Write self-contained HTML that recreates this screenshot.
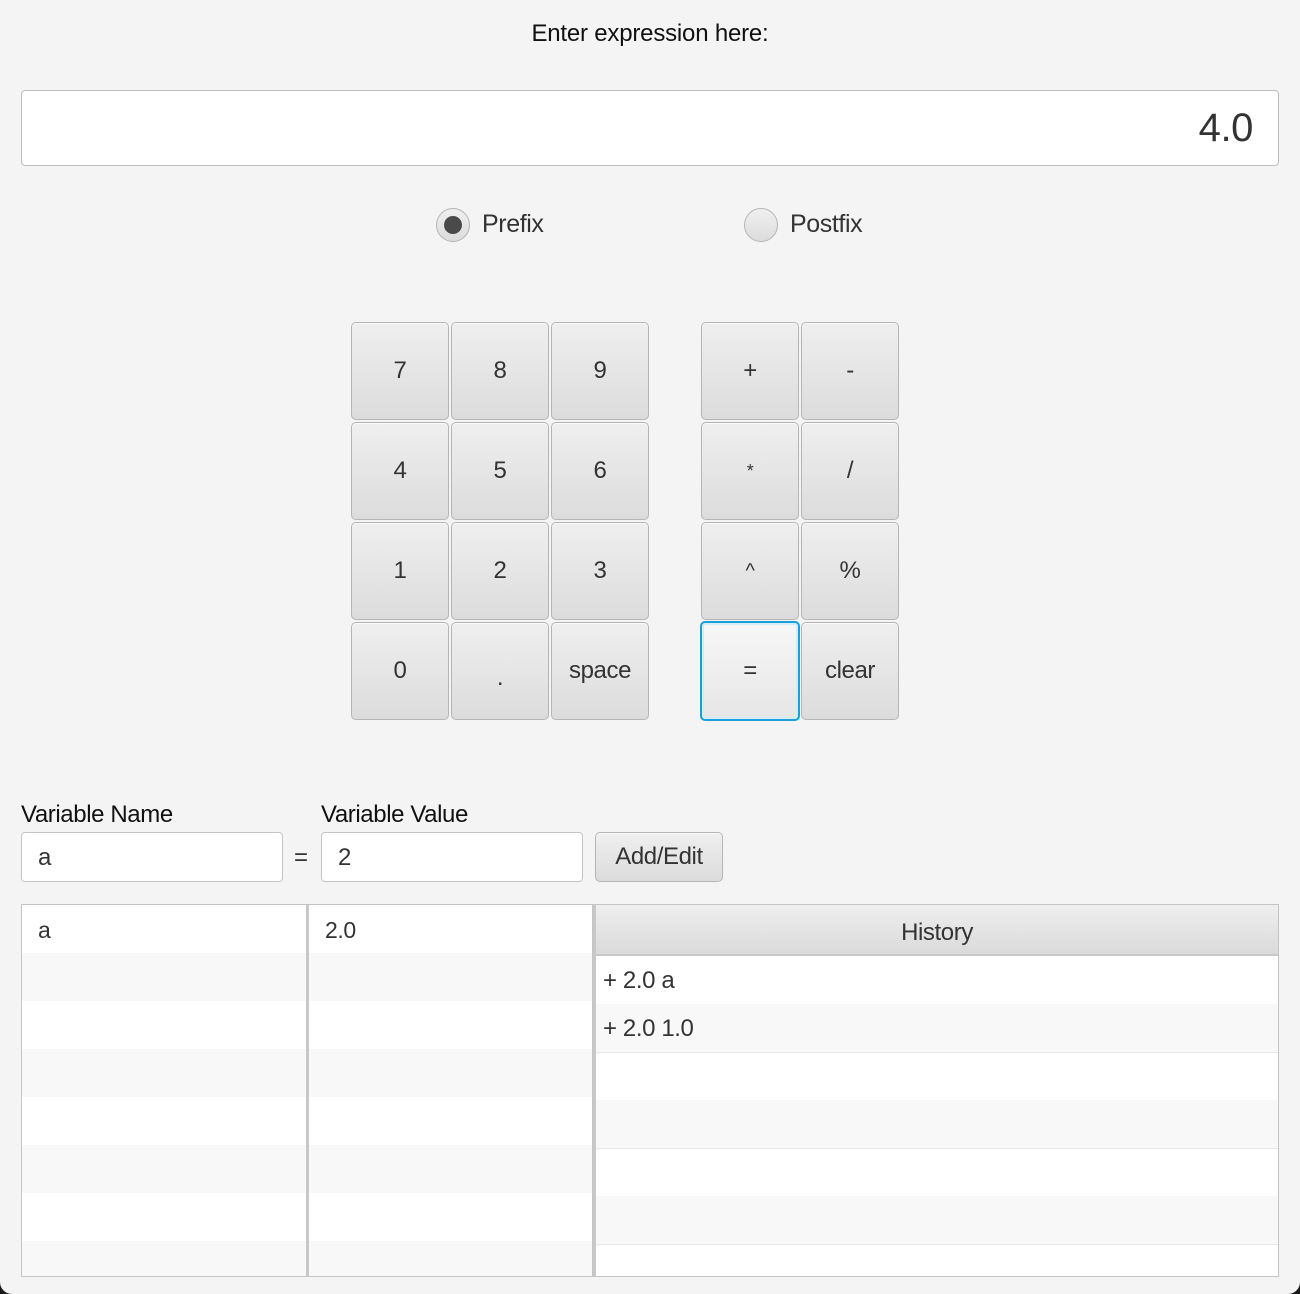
<!DOCTYPE html>
<html><head><meta charset="utf-8"><style>
html,body{margin:0;padding:0;width:1300px;height:1294px;background:#1a1a1a;overflow:hidden}
#w{position:absolute;left:0;top:0;width:1300px;height:1294px;background:#f4f4f4;border-radius:0 0 12px 12px;font-family:"Liberation Sans",sans-serif;color:#333;letter-spacing:-0.4px}
.a{position:absolute}
.btn{position:absolute;width:96px;height:96px;border:1px solid #b5b5b5;border-radius:5px;background:linear-gradient(#efefef,#dcdcdc);box-shadow:inset 0 1px 0 #fafafa;font-size:24px;display:flex;align-items:center;justify-content:center;color:#333}
.tf{position:absolute;background:#fff;border:1px solid #c4c4c4;border-radius:4px;box-sizing:border-box}
.row{position:absolute;height:48px}
</style></head><body><div id="w">
<div class="a" style="left:0;width:1300px;top:20px;text-align:center;font-size:24px;color:#111;letter-spacing:-0.2px">Enter expression here:</div>
<div class="tf" style="left:21px;top:90px;width:1258px;height:76px;border-color:#bdbdbd"></div>
<div class="a" style="right:47px;top:106px;font-size:40px;color:#333">4.0</div>

<div class="a" style="left:436px;top:208px;width:32px;height:32px;border-radius:50%;border:1px solid #b5b5b5;background:linear-gradient(#f0f0f0,#dcdcdc)"></div>
<div class="a" style="left:444px;top:216px;width:18px;height:18px;border-radius:50%;background:#4a4a4a"></div>
<div class="a" style="left:482px;top:210px;font-size:25px">Prefix</div>
<div class="a" style="left:744px;top:208px;width:32px;height:32px;border-radius:50%;border:1px solid #b5b5b5;background:linear-gradient(#f0f0f0,#dcdcdc)"></div>
<div class="a" style="left:790px;top:210px;font-size:25px">Postfix</div>

<div class="btn" style="left:351px;top:322px">7</div>
<div class="btn" style="left:451px;top:322px">8</div>
<div class="btn" style="left:551px;top:322px">9</div>
<div class="btn" style="left:701px;top:322px">+</div>
<div class="btn" style="left:801px;top:322px">-</div>
<div class="btn" style="left:351px;top:422px">4</div>
<div class="btn" style="left:451px;top:422px">5</div>
<div class="btn" style="left:551px;top:422px">6</div>
<div class="btn" style="left:701px;top:422px;font-size:18px">*</div>
<div class="btn" style="left:801px;top:422px">/</div>
<div class="btn" style="left:351px;top:522px">1</div>
<div class="btn" style="left:451px;top:522px">2</div>
<div class="btn" style="left:551px;top:522px">3</div>
<div class="btn" style="left:701px;top:522px;font-size:20px">^</div>
<div class="btn" style="left:801px;top:522px">%</div>
<div class="btn" style="left:351px;top:622px">0</div>
<div class="btn" style="left:451px;top:622px;padding-top:14px;box-sizing:border-box;width:98px;height:98px">.</div>
<div class="btn" style="left:551px;top:622px">space</div>
<div class="btn" style="left:700px;top:621px;border:2px solid #1aa0db;background:linear-gradient(#f7f7f7,#e6e6e6);box-shadow:inset 0 0 0 2px #d6ecf6">=</div>
<div class="btn" style="left:801px;top:622px">clear</div>

<div class="a" style="left:21px;top:801px;font-size:24px;color:#111">Variable Name</div>
<div class="a" style="left:321px;top:801px;font-size:24px;color:#111">Variable Value</div>
<div class="tf" style="left:21px;top:832px;width:262px;height:50px"></div>
<div class="a" style="left:38px;top:844px;font-size:24px">a</div>
<div class="a" style="left:294px;top:844px;font-size:24px">=</div>
<div class="tf" style="left:321px;top:832px;width:262px;height:50px"></div>
<div class="a" style="left:338px;top:844px;font-size:24px">2</div>
<div class="btn" style="left:595px;top:832px;width:126px;height:48px">Add/Edit</div>

<div class="a" style="left:21px;top:904px;width:572px;height:373px;border:1px solid #c4c4c4;box-sizing:border-box;background:#fff;overflow:hidden">
 <div class="row" style="top:48px;width:100%;background:#f8f8f8"></div>
 <div class="row" style="top:144px;width:100%;background:#f8f8f8"></div>
 <div class="row" style="top:240px;width:100%;background:#f8f8f8"></div>
 <div class="row" style="top:336px;width:100%;background:#f8f8f8"></div>
 <div class="a" style="left:284px;top:0;width:3px;height:100%;background:#c8c8c8"></div>
 <div class="a" style="left:16px;top:12px;font-size:23px">a</div>
 <div class="a" style="left:303px;top:12px;font-size:23px">2.0</div>
</div>
<div class="a" style="left:593px;top:904px;width:686px;height:373px;border:1px solid #c4c4c4;border-left:3px solid #c8c8c8;box-sizing:border-box;background:#fff;overflow:hidden">
 <div class="a" style="left:0;top:0;width:100%;height:51px;background:linear-gradient(#efefef,#dadada);border-bottom:2px solid #c8c8c8;box-sizing:border-box"></div>
 <div class="a" style="left:0;width:100%;top:14px;text-align:center;font-size:24px">History</div>
 <div class="row" style="top:51px;width:100%;border-bottom:1px solid #e8e8e8"></div>
 <div class="row" style="top:99px;width:100%;background:#f8f8f8;border-bottom:1px solid #e8e8e8"></div>
 <div class="row" style="top:147px;width:100%;border-bottom:1px solid #e8e8e8"></div>
 <div class="row" style="top:195px;width:100%;background:#f8f8f8;border-bottom:1px solid #e8e8e8"></div>
 <div class="row" style="top:243px;width:100%;border-bottom:1px solid #e8e8e8"></div>
 <div class="row" style="top:291px;width:100%;background:#f8f8f8;border-bottom:1px solid #e8e8e8"></div>
 <div class="a" style="left:7px;top:62px;font-size:24px">+ 2.0 a</div>
 <div class="a" style="left:7px;top:110px;font-size:24px">+ 2.0 1.0</div>
</div>
</div></body></html>
